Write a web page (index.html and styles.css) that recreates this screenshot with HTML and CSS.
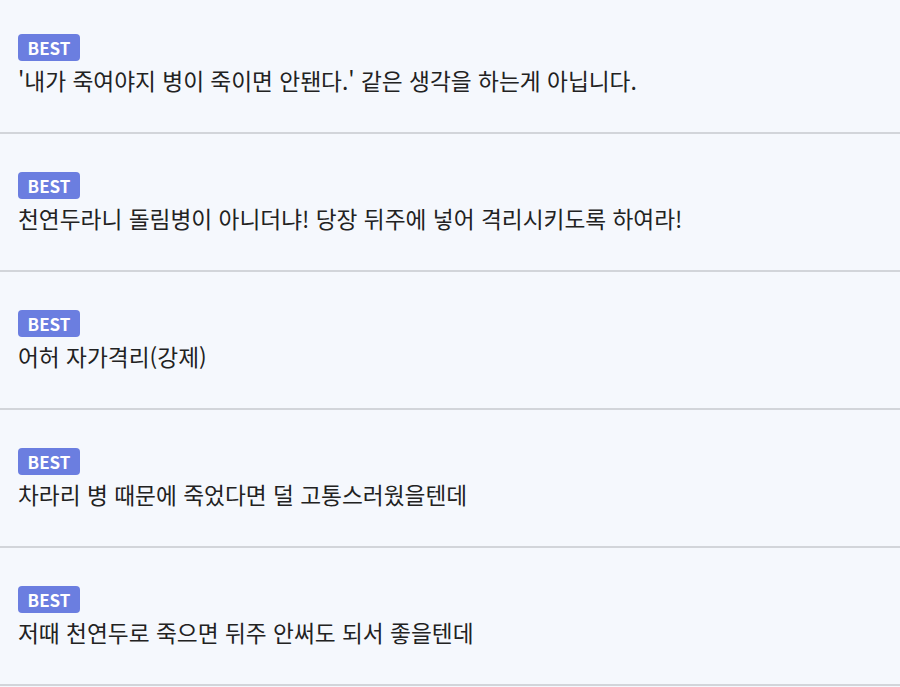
FILE: index.html
```html
<!DOCTYPE html>
<html lang="ko">
<head>
<meta charset="utf-8">
<link rel="stylesheet" href="styles.css">
</head>
<body>
<ul class="comments">
  <li class="comment">
    <span class="badge">BEST</span>
    <p class="text">'내가 죽여야지 병이 죽이면 안됀다.' 같은 생각을 하는게 아닙니다.</p>
  </li>
  <li class="comment">
    <span class="badge">BEST</span>
    <p class="text">천연두라니 돌림병이 아니더냐! 당장 뒤주에 넣어 격리시키도록 하여라!</p>
  </li>
  <li class="comment">
    <span class="badge">BEST</span>
    <p class="text">어허 자가격리(강제)</p>
  </li>
  <li class="comment">
    <span class="badge">BEST</span>
    <p class="text">차라리 병 때문에 죽었다면 덜 고통스러웠을텐데</p>
  </li>
  <li class="comment">
    <span class="badge">BEST</span>
    <p class="text">저때 천연두로 죽으면 뒤주 안써도 되서 좋을텐데</p>
  </li>
</ul>
</body>
</html>
```
FILE: styles.css
```css
html, body {
  margin: 0;
  padding: 0;
  background: #f5f8fd;
}
body {
  font-family: "Noto Sans CJK KR", "Noto Sans", sans-serif;
  color: #222;
  overflow: hidden;
}
.comments {
  list-style: none;
  margin: -4px 0 0 0;
  padding: 0;
}
.comment {
  height: 138px;
  box-sizing: border-box;
  padding: 38px 18px 0;
  border-bottom: 2px solid #d2d5da;
  display: flex;
  flex-direction: column;
  align-items: flex-start;
  gap: 5px;
}
.badge {
  display: inline-flex;
  align-items: center;
  justify-content: center;
  width: 62px;
  height: 27px;
  background: #6b7ee0;
  color: #fff;
  border-radius: 4px;
  font-weight: 700;
  font-size: 17px;
}
.text {
  margin: 0;
  font-size: 22.7px;
  line-height: 30px;
  color: #222;
}
```
